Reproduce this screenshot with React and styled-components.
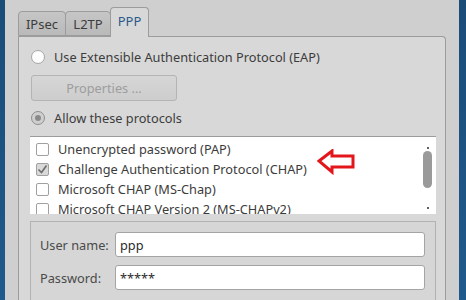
import React from "react";
import styled, { createGlobalStyle } from "styled-components";

const Global = createGlobalStyle`
  html, body { margin: 0; padding: 0; }
  body {
    background: #cfcfcf;
    font-family: "Noto Sans", "Open Sans", sans-serif;
    font-size: 12.75px;
    color: #3c3c3c;
    overflow: hidden;
  }
`;

const Window = styled.div`
  display: flex;
  width: 466px;
  height: 300px;
  overflow: hidden;
  background: #cfcfcf;
`;

const Edge = styled.div`
  flex: 0 0 ${(p) => p.$w}px;
  background: linear-gradient(180deg, #1a4c78 0%, #1f5a8c 100%);
`;

const Main = styled.div`
  flex: 1;
  padding: 7px 13px 0 13px;
  display: flex;
  flex-direction: column;
`;

const TabBar = styled.div`
  display: flex;
  align-items: flex-end;
  height: 29px;
  position: relative;
  z-index: 1;
`;

const Tab = styled.div`
  box-sizing: border-box;
  width: ${(p) => p.$w}px;
  height: ${(p) => (p.$active ? 30 : 25)}px;
  margin-left: ${(p) => (p.$first ? 0 : -1)}px;
  margin-bottom: ${(p) => (p.$active ? -1 : 0)}px;
  border: 1px solid #9c9c9c;
  border-bottom: ${(p) => (p.$active ? "none" : "1px solid #9c9c9c")};
  border-radius: 4px 4px 0 0;
  background: ${(p) =>
    p.$active ? "#d8d8d8" : "linear-gradient(180deg, #c6c6c6 0%, #b9b9b9 100%)"};
  display: flex;
  justify-content: center;
  align-items: center;
  padding-top: 1px;
  padding-bottom: ${(p) => (p.$active ? 4 : 0)}px;
  font-size: 13px;
  color: ${(p) => (p.$active ? "#2a5a8a" : "#3c3c3c")};
`;

const Panel = styled.div`
  box-sizing: border-box;
  width: 428px;
  flex: 1;
  border: 1px solid #9c9c9c;
  border-bottom: none;
  border-radius: 0 4px 0 0;
  background: #d8d8d8;
  padding: 10px 9px 0 11px;
  display: flex;
  flex-direction: column;
`;

const RadioRow = styled.label`
  display: flex;
  align-items: center;
  height: 20px;
  gap: 9px;
  margin-left: 1px;
`;

const Radio = styled.span`
  box-sizing: border-box;
  width: 14px;
  height: 14px;
  border-radius: 50%;
  border: 1px solid ${(p) => (p.$checked ? "#8e8e8e" : "#a6a6a6")};
  background: ${(p) => (p.$checked ? "#cfcfcf" : "#fdfdfd")};
  display: flex;
  align-items: center;
  justify-content: center;
  &::after {
    content: "";
    display: ${(p) => (p.$checked ? "block" : "none")};
    width: 6px;
    height: 6px;
    border-radius: 50%;
    background: #8a8a8a;
  }
`;

const PropButton = styled.div`
  box-sizing: border-box;
  width: 146px;
  height: 26px;
  margin: 8px 0 7px 1px;
  border: 1px solid #b4b4b4;
  border-radius: 3px;
  background: linear-gradient(180deg, #d6d6d6 0%, #cdcdcd 100%);
  color: #9d9d9d;
  display: flex;
  align-items: center;
  justify-content: center;
`;

const List = styled.div`
  box-sizing: border-box;
  position: relative;
  margin-top: 8px;
  height: 78px;
  background: #ffffff;
  border-top: 1px solid #9c9c9c;
  overflow: hidden;
  padding: 2px 0 0 6px;
`;

const Item = styled.div`
  display: flex;
  align-items: center;
  height: 20px;
  gap: 9px;
  white-space: nowrap;
`;

const Check = styled.span`
  box-sizing: border-box;
  flex: 0 0 13px;
  width: 13px;
  height: 13px;
  border: 1px solid #a0a0a0;
  border-radius: 2px;
  background: ${(p) => (p.$checked ? "#d9d9d9" : "#ffffff")};
  display: flex;
  align-items: center;
  justify-content: center;
`;

const ScrollTrack = styled.div`
  position: absolute;
  right: 4px;
  top: 6px;
  bottom: 5px;
  width: 9px;
`;

const Thumb = styled.div`
  position: absolute;
  left: 0;
  top: 8px;
  width: 9px;
  height: 37px;
  border-radius: 5px;
  background: #9a9a9a;
`;

const Dot = styled.div`
  position: absolute;
  left: 4px;
  bottom: ${(p) => p.$b}px;
  width: 2px;
  height: 2px;
  background: #606060;
`;

const Arrow = styled.svg`
  position: absolute;
  left: 287px;
  top: 12px;
`;

const Group = styled.div`
  box-sizing: border-box;
  margin-top: 7px;
  flex: 1;
  border: 1px solid #b2b2b2;
  border-bottom: none;
  background: #d6d6d6;
  padding: 10px 10px 0 9px;
  display: grid;
  grid-template-columns: 75px 1fr;
  grid-auto-rows: 25px;
  row-gap: 8px;
  align-items: center;
`;

const FieldLabel = styled.span`
  color: #4a4a4a;
`;

const Input = styled.div`
  box-sizing: border-box;
  height: 25px;
  border: 1px solid #a4a4a4;
  border-radius: 3px;
  background: #ffffff;
  padding: 0 4px;
  display: flex;
  align-items: center;
  color: #2c2c2c;
`;

const CheckMark = () => (
  <svg width="11" height="11" viewBox="0 0 11 11">
    <path d="M1.5 5.5 L4.5 8.5 L9.5 1.5" fill="none" stroke="#6c6c6c" strokeWidth="1.6" />
  </svg>
);

const items = [
  { label: "Unencrypted password (PAP)", checked: false },
  { label: "Challenge Authentication Protocol (CHAP)", checked: true },
  { label: "Microsoft CHAP (MS-Chap)", checked: false },
  { label: "Microsoft CHAP Version 2 (MS-CHAPv2)", checked: false },
];

export default function App() {
  return (
    <>
      <Global />
      <Window>
        <Edge $w={5} />
        <Main>
          <TabBar>
            <Tab $w={48} $first>IPsec</Tab>
            <Tab $w={46}>L2TP</Tab>
            <Tab $w={39} $active>PPP</Tab>
          </TabBar>
          <Panel>
            <RadioRow>
              <Radio />
              Use Extensible Authentication Protocol (EAP)
            </RadioRow>
            <PropButton>Properties ...</PropButton>
            <RadioRow>
              <Radio $checked />
              Allow these protocols
            </RadioRow>
            <List>
              {items.map((it) => (
                <Item key={it.label}>
                  <Check $checked={it.checked}>{it.checked && <CheckMark />}</Check>
                  {it.label}
                </Item>
              ))}
              <Arrow width="40" height="26" viewBox="0 0 40 26">
                <path
                  d="M2 12 L15 2 L15 7 L36 7 L36 18 L15 18 L15 23 Z"
                  fill="#ffffff"
                  stroke="#e3161c"
                  strokeWidth="3"
                  strokeLinejoin="miter"
                />
              </Arrow>
              <ScrollTrack>
                <Dot $b={60} />
                <Thumb />
                <Dot $b={0} />
              </ScrollTrack>
            </List>
            <Group>
              <FieldLabel>User name:</FieldLabel>
              <Input>ppp</Input>
              <FieldLabel>Password:</FieldLabel>
              <Input>*****</Input>
            </Group>
          </Panel>
        </Main>
        <Edge $w={7} />
      </Window>
    </>
  );
}
